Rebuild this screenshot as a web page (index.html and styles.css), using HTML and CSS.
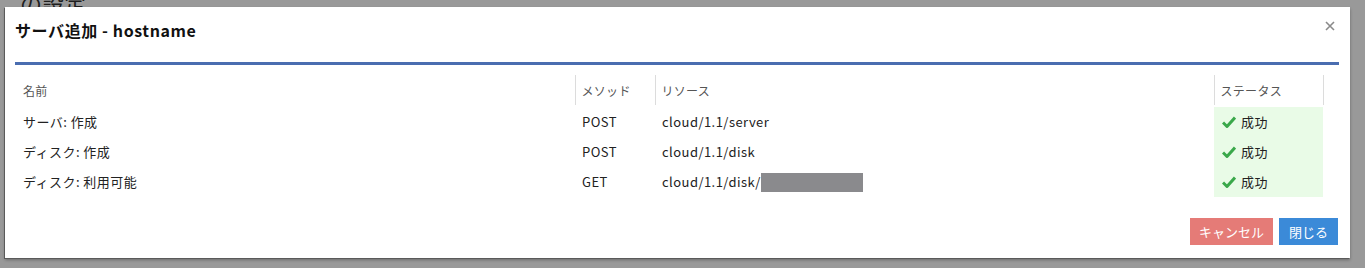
FILE: index.html
```html
<!DOCTYPE html>
<html lang="ja">
<head>
<meta charset="utf-8">
<title>サーバ追加</title>
<link rel="stylesheet" href="styles.css">
</head>
<body>
<div class="page">
  <div class="page-title">の設定</div>
</div>
<div class="overlay"></div>
<div class="modal">
  <div class="modal-header">
    <h1 class="modal-title">サーバ追加 - hostname</h1>
    <button class="close" aria-label="閉じる">
      <svg width="10" height="10" viewBox="0 0 10 10"><path d="M1 1 L9 9 M9 1 L1 9" stroke="#8a8a8a" stroke-width="1.6" fill="none"/></svg>
    </button>
  </div>
  <div class="divider"></div>
  <table class="grid">
    <colgroup>
      <col class="c-name"><col class="c-method"><col class="c-res"><col class="c-status"><col class="c-pad">
    </colgroup>
    <thead>
      <tr><th>名前</th><th class="sep">メソッド</th><th class="sep">リソース</th><th class="sep">ステータス</th><th class="sep"></th></tr>
    </thead>
    <tbody>
      <tr><td>サーバ: 作成</td><td>POST</td><td>cloud/1.1/server</td><td class="ok"><span class="check"><svg width="14" height="12" viewBox="0 0 14 12"><path d="M1 6.5 L5 10.5 L13 1.5" stroke="#3aa84a" stroke-width="3" fill="none" stroke-linejoin="round"/></svg></span>成功</td><td></td></tr>
      <tr><td>ディスク: 作成</td><td>POST</td><td>cloud/1.1/disk</td><td class="ok"><span class="check"><svg width="14" height="12" viewBox="0 0 14 12"><path d="M1 6.5 L5 10.5 L13 1.5" stroke="#3aa84a" stroke-width="3" fill="none" stroke-linejoin="round"/></svg></span>成功</td><td></td></tr>
      <tr><td>ディスク: 利用可能</td><td>GET</td><td>cloud/1.1/disk/<span class="redact"></span></td><td class="ok"><span class="check"><svg width="14" height="12" viewBox="0 0 14 12"><path d="M1 6.5 L5 10.5 L13 1.5" stroke="#3aa84a" stroke-width="3" fill="none" stroke-linejoin="round"/></svg></span>成功</td><td></td></tr>
    </tbody>
  </table>
  <div class="footer">
    <button class="btn cancel">キャンセル</button>
    <button class="btn primary">閉じる</button>
  </div>
</div>
</body>
</html>
```
FILE: styles.css
```css
html, body {
  margin: 0;
  padding: 0;
}
body {
  width: 1365px;
  height: 268px;
  overflow: hidden;
  background: #ffffff;
  font-family: "Noto Sans CJK JP", "Noto Sans", sans-serif;
  position: relative;
}
.page {
  padding: 0 0 0 20px;
}
.page-title {
  font-size: 22px;
  line-height: 22px;
  margin-top: -9px;
  color: #333;
}
.overlay {
  position: absolute;
  inset: 0;
  background: rgba(0, 0, 0, 0.4);
}
.modal {
  position: absolute;
  left: 5px;
  top: 7px;
  width: 1345px;
  height: 251px;
  box-sizing: border-box;
  background: #fff;
  padding: 0 11px 0 10px;
  box-shadow: -1px 1px 0 #5a5a5a, 0 2px 3px rgba(0,0,0,0.3);
  display: flex;
  flex-direction: column;
}
.modal-header {
  display: flex;
  justify-content: space-between;
  align-items: flex-start;
  padding-top: 11px;
}
.modal-title {
  margin: 0;
  font-size: 16px;
  line-height: 24px;
  font-weight: 700;
  letter-spacing: 0.6px;
  color: #111;
}
.close {
  border: 0;
  background: none;
  padding: 0;
  margin: 1px 2px 0 0;
  width: 14px;
  height: 14px;
  display: flex;
  align-items: center;
  justify-content: center;
}
.divider {
  height: 3px;
  background: #4a6db0;
  margin-top: 20px;
}
.grid {
  border-collapse: collapse;
  table-layout: fixed;
  width: 1324px;
  margin-top: 10px;
  font-size: 13px;
  letter-spacing: 0.45px;
  color: #222;
}
.c-name { width: 560px; }
.c-method { width: 80px; }
.c-res { width: 559px; }
.c-status { width: 109px; }
.c-pad { width: 16px; }
.grid th {
  font-weight: 400;
  font-size: 12px;
  letter-spacing: 0.3px;
  color: #555;
  text-align: left;
  height: 30px;
  padding: 0 0 0 8px;
  border-bottom: 2px solid #fff;
}
.grid th.sep {
  border-left: 1px solid #dcdcdc;
  padding-left: 6px;
}
.grid td {
  height: 30px;
  padding: 0 0 0 8px;
  line-height: 28px;
  white-space: nowrap;
  vertical-align: middle;
}
.grid td:nth-child(2), .grid td:nth-child(3) {
  padding-left: 7px;
}
.grid td.ok {
  background: #e9fbe7;
  padding-left: 8px;
}
.check {
  display: inline-block;
  line-height: 0;
  vertical-align: middle;
  margin: -2px 5px 0 0;
}
.redact {
  display: inline-block;
  width: 102px;
  height: 19px;
  background: #8a8a8d;
  vertical-align: middle;
  margin-top: -2px;
}
.footer {
  display: flex;
  justify-content: flex-end;
  gap: 6px;
  margin-top: 21px;
  padding-right: 1px;
}
.btn {
  border: 0;
  height: 27px;
  font-family: "Noto Sans CJK JP", sans-serif;
  font-size: 13px;
  color: #fff;
  padding: 0;
}
.cancel {
  width: 83px;
  background: #e57b77;
}
.primary {
  width: 59px;
  background: #3b8ad8;
}
```
